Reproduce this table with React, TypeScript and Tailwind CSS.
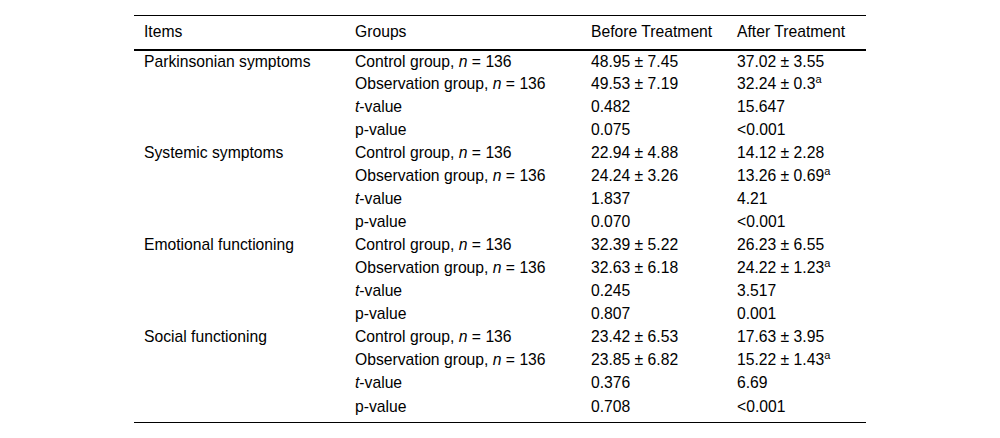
import React from 'react';

interface Row {
    item?: string;
    group: React.ReactNode;
    before: string;
    after: React.ReactNode;
}

const ctrl = <>Control group, <i>n</i> = 136</>;
const obs = <>Observation group, <i>n</i> = 136</>;
const tval = <><i>t</i>-value</>;

// superscript "a" marks a significant change vs. control
const sup = (v: string) => (
    <>
        {v}
        <span className="relative -top-[6px] text-[11px] leading-none">a</span>
    </>
);

const rows: Row[] = [
    { item: 'Parkinsonian symptoms', group: ctrl, before: '48.95 ± 7.45', after: '37.02 ± 3.55' },
    { group: obs, before: '49.53 ± 7.19', after: sup('32.24 ± 0.3') },
    { group: tval, before: '0.482', after: '15.647' },
    { group: 'p-value', before: '0.075', after: '<0.001' },
    { item: 'Systemic symptoms', group: ctrl, before: '22.94 ± 4.88', after: '14.12 ± 2.28' },
    { group: obs, before: '24.24 ± 3.26', after: sup('13.26 ± 0.69') },
    { group: tval, before: '1.837', after: '4.21' },
    { group: 'p-value', before: '0.070', after: '<0.001' },
    { item: 'Emotional functioning', group: ctrl, before: '32.39 ± 5.22', after: '26.23 ± 6.55' },
    { group: obs, before: '32.63 ± 6.18', after: sup('24.22 ± 1.23') },
    { group: tval, before: '0.245', after: '3.517' },
    { group: 'p-value', before: '0.807', after: '0.001' },
    { item: 'Social functioning', group: ctrl, before: '23.42 ± 6.53', after: '17.63 ± 3.95' },
    { group: obs, before: '23.85 ± 6.82', after: sup('15.22 ± 1.43') },
    { group: tval, before: '0.376', after: '6.69' },
    { group: 'p-value', before: '0.708', after: '<0.001' },
];

export default function App() {
    return (
        <div className="w-[1000px] h-[438px] bg-white pt-[15px] font-['Liberation_Sans',Arial,sans-serif] text-[15.7px] leading-[18px] text-black">
            <table className="mx-auto w-[732px] border-collapse">
                <colgroup>
                    <col className="w-[211px]" />
                    <col className="w-[236px]" />
                    <col className="w-[146px]" />
                    <col className="w-[139px]" />
                </colgroup>
                <thead>
                    <tr className="h-[34px] border-t border-black border-b-2">
                        <th className="text-left font-normal pl-[10px]">Items</th>
                        <th className="text-left font-normal pl-[10px]">Groups</th>
                        <th className="text-left font-normal pl-[10px]">Before Treatment</th>
                        <th className="text-left font-normal pl-[10px]">After Treatment</th>
                    </tr>
                </thead>
                <tbody className="border-b border-black">
                    {rows.map((r, idx) => {
                        const last = idx === rows.length - 1;
                        const cell = last ? 'pl-[10px] pt-[3px] align-top' : 'pl-[10px]';
                        return (
                            <tr key={idx} className={last ? 'h-[28px]' : 'h-[23px]'}>
                                <td className={cell}>{r.item ?? ''}</td>
                                <td className={cell}>{r.group}</td>
                                <td className={cell}>{r.before}</td>
                                <td className={cell}>{r.after}</td>
                            </tr>
                        );
                    })}
                </tbody>
            </table>
        </div>
    );
}
